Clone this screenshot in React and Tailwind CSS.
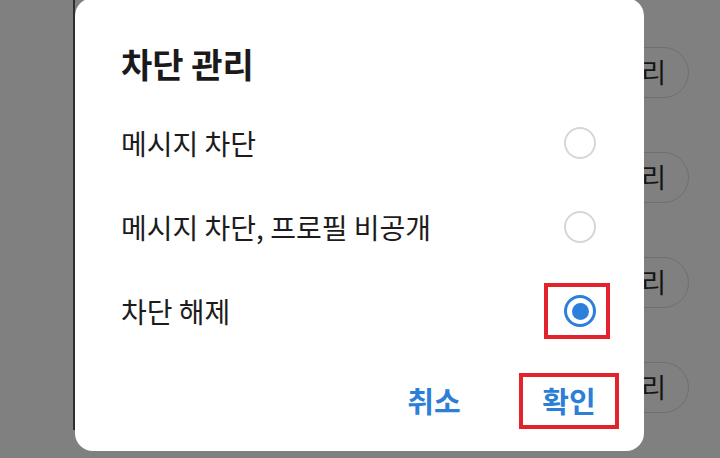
import React from "react";

const font = { fontFamily: '"Noto Sans CJK KR", "Noto Sans", sans-serif' };

function Radio({ selected }) {
  if (selected) {
    return (
      <div className="relative w-8 h-8">
        <div className="w-8 h-8 rounded-full border-[3px] border-[#2c80da] flex items-center justify-center">
          <div className="w-[17px] h-[17px] rounded-full bg-[#2c80da]" />
        </div>
        <div className="absolute -left-[20px] -right-[14px] -top-[12px] -bottom-[12px] border-[4px] border-[#e3232b]" />
      </div>
    );
  }
  return <div className="w-8 h-8 rounded-full border-[2.5px] border-[#d6d6d6]" />;
}

function Option({ label, selected }) {
  return (
    <div className="h-[84px] flex items-center justify-between">
      <span className="text-[28px] text-[#1c1c1c] leading-none">{label}</span>
      <Radio selected={selected} />
    </div>
  );
}

export default function App() {
  return (
    <div className="relative w-[720px] h-[458px] overflow-hidden bg-[#808080]" style={font}>
      {/* underlying page */}
      <div className="flex flex-col items-end pt-[47px] gap-[54px] pr-[31px]">
        {[0, 1, 2, 3].map((i) => (
          <div
            key={i}
            className="h-[51px] w-[110px] rounded-full border border-[#6f6f6f] flex items-center justify-end pr-[22px] text-[27px] text-[#151515]"
          >
            관리
          </div>
        ))}
      </div>
      <div className="absolute left-[73px] top-0 w-[2px] h-[430px] bg-[#2e2e2e]" />

      {/* dialog */}
      <div className="absolute left-[75px] -top-[2px] w-[569px] h-[453px] bg-white rounded-[18px] flex flex-col pt-[35px] pl-[46px] pr-[48px]">
        <div className="h-[60px] flex items-center text-[34px] font-bold text-[#1a1a1a]">차단 관리</div>
        <div className="mt-[8px] flex flex-col">
          <Option label="메시지 차단" />
          <Option label="메시지 차단, 프로필 비공개" />
          <Option label="차단 해제" selected />
        </div>
        <div className="mt-[20px] -mr-[23px] flex justify-end gap-[35px]">
          <div className="w-[100px] h-[56px] flex items-center justify-center text-[29px] font-bold text-[#2b7fd6]">취소</div>
          <div className="w-[100px] h-[56px] flex items-center justify-center text-[29px] font-bold text-[#2b7fd6] border-[4px] border-[#e3232b]">확인</div>
        </div>
      </div>
    </div>
  );
}
